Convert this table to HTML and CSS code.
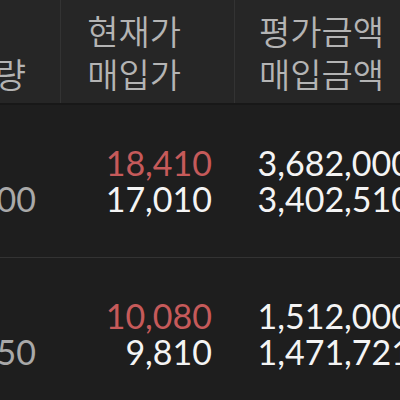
FILE: index.html
```html
<!DOCTYPE html>
<html lang="ko">
<head>
<meta charset="utf-8">
<link rel="stylesheet" href="styles.css">
</head>
<body>
<div class="table">
  <div class="head">
    <div class="cell c1"><span>&nbsp;</span><span>량</span></div>
    <div class="cell c2"><span>현재가</span><span>매입가</span></div>
    <div class="cell c3"><span>평가금액</span><span>매입금액</span></div>
  </div>
  <div class="row">
    <div class="cell c1"><span class="qty">&nbsp;</span><span class="qty">00</span></div>
    <div class="cell c2"><span class="up">18,410</span><span class="val">17,010</span></div>
    <div class="cell c3"><span class="val">3,682,000</span><span class="val">3,402,510</span></div>
  </div>
  <div class="row">
    <div class="cell c1"><span class="qty">&nbsp;</span><span class="qty">50</span></div>
    <div class="cell c2"><span class="up">10,080</span><span class="val">9,810</span></div>
    <div class="cell c3"><span class="val">1,512,000</span><span class="val">1,471,721</span></div>
  </div>
</div>
</body>
</html>
```
FILE: styles.css
```css
html, body {
  margin: 0;
  padding: 0;
  background: #1e1e1e;
  overflow: hidden;
}
.table {
  width: 440px;
  display: flex;
  flex-direction: column;
}
.head, .row {
  display: flex;
}
.head {
  height: 103px;
  background: #262626;
  border-bottom: 2px solid #181818;
  font-family: "Noto Sans CJK KR", "Noto Sans", sans-serif;
  font-size: 34px;
  font-weight: 350;
  line-height: 43px;
  color: #b4b4b4;
}
.row {
  height: 152px;
  border-bottom: 1px solid #333333;
  font-family: Lato, "Liberation Sans", sans-serif;
  font-size: 34px;
  font-weight: 400;
  line-height: 36px;
}
.cell {
  display: flex;
  flex-direction: column;
  justify-content: center;
  align-items: flex-end;
  box-sizing: border-box;
}
.c1 { width: 61px; }
.c2 { width: 174px; }
.c3 { width: 200px; }
.head .c1 { padding-right: 34px; border-right: 1px solid #333; }
.head .c2 { padding-right: 53px; border-right: 1px solid #333; }
.head .c3 { padding-right: 51px; }
.row .c1 { padding-right: 25px; }
.row .c2 { padding-right: 23px; }
.row .c3 { padding-right: 24px; }
.qty { color: #a9a9a9; }
.up { color: #c65a5a; }
.val { color: #f4f4f4; }
```
